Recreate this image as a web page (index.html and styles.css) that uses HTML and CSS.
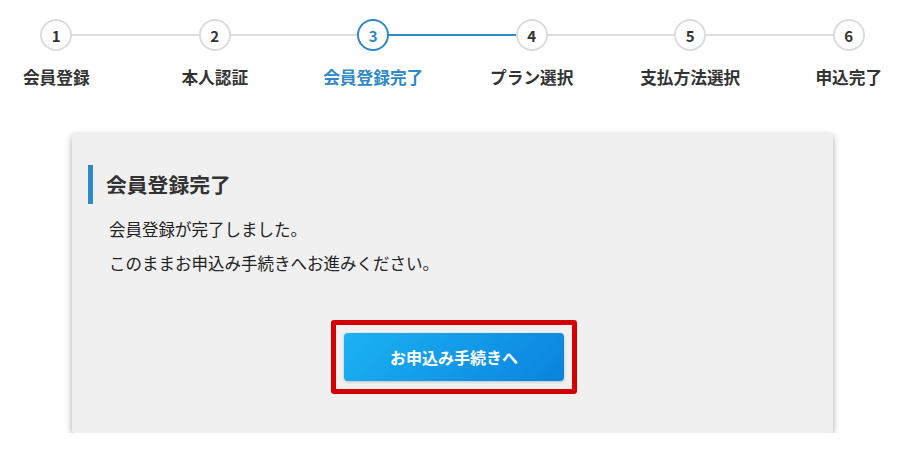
FILE: index.html
```html
<!DOCTYPE html>
<html lang="ja">
<head>
  <meta charset="UTF-8" />
  <meta name="viewport" content="width=device-width, initial-scale=1.0"/>
  <title>会員登録完了</title>
  <link rel="stylesheet" href="styles.css">
</head>
<body>
  <ol class="steps">
    <li class="step done"><span class="num">1</span><span class="label">会員登録</span></li>
    <li class="step done"><span class="num">2</span><span class="label">本人認証</span></li>
    <li class="step current"><span class="num">3</span><span class="label">会員登録完了</span></li>
    <li class="step next"><span class="num">4</span><span class="label">プラン選択</span></li>
    <li class="step"><span class="num">5</span><span class="label">支払方法選択</span></li>
    <li class="step"><span class="num">6</span><span class="label">申込完了</span></li>
  </ol>

  <div class="card">
    <h2>会員登録完了</h2>
    <p>会員登録が完了しました。</p>
    <p>このままお申込み手続きへお進みください。</p>
    <div class="actions">
      <div class="highlight">
        <button type="button">お申込み手続きへ</button>
      </div>
    </div>
  </div>
</body>
</html>
```

FILE: styles.css
```css
:root {
  --blue: #2f88c8;
  --grey-line: #dcdcdc;
  --text-dark: #333333;
  --card-bg: #f0f0f0;
  --red: #d40000;
}

* {
  box-sizing: border-box;
  margin: 0;
  padding: 0;
}

body {
  font-family: "Noto Sans CJK JP", "Noto Sans", sans-serif;
  background-color: #ffffff;
  color: var(--text-dark);
  overflow: hidden;
}

.steps {
  list-style: none;
  display: grid;
  grid-template-columns: repeat(6, 1fr);
  margin: 0 -23px;
  padding-top: 19px;
}

.step {
  position: relative;
  display: flex;
  flex-direction: column;
  align-items: center;
}

.step + .step::before {
  content: "";
  position: absolute;
  top: 15px;
  left: -50%;
  width: 100%;
  height: 2px;
  background-color: var(--grey-line);
}

.step.next::before {
  background-color: var(--blue);
}

.num {
  position: relative;
  z-index: 1;
  width: 32px;
  height: 32px;
  border: 2px solid var(--grey-line);
  border-radius: 50%;
  background-color: #ffffff;
  display: flex;
  align-items: center;
  justify-content: center;
  font-size: 15px;
  font-weight: 700;
  line-height: 1;
}

.label {
  margin-top: 14px;
  font-size: 16.7px;
  font-weight: 700;
  line-height: 24px;
  white-space: nowrap;
}

.step.current .num {
  border-color: var(--blue);
  color: var(--blue);
}

.step.current .label {
  color: var(--blue);
}

.card {
  margin: 45px 0 0 72px;
  width: 761px;
  height: 299px;
  background-color: var(--card-bg);
  border-radius: 3px;
  box-shadow: 0 2px 7px rgba(0, 0, 0, 0.35);
  padding: 31px 16px 0;
}

h2 {
  border-left: 5px solid var(--blue);
  padding-left: 13px;
  font-size: 20.8px;
  font-weight: 700;
  line-height: 39px;
  margin-bottom: 8px;
}

p {
  padding-left: 21px;
  font-size: 16.5px;
  line-height: 34px;
  color: #222222;
}

.actions {
  display: flex;
  justify-content: center;
  margin-top: 40px;
  padding-left: 3px;
}

.highlight {
  border: 5px solid var(--red);
  border-radius: 3px;
  padding: 8px;
}

button {
  width: 220px;
  height: 48px;
  border: none;
  border-radius: 4px;
  background: linear-gradient(135deg, #1cb2f2 0%, #0a83de 100%);
  box-shadow: 0 1px 3px rgba(0, 0, 0, 0.2);
  color: #ffffff;
  font-family: inherit;
  font-size: 16px;
  font-weight: 700;
  cursor: pointer;
}
```
